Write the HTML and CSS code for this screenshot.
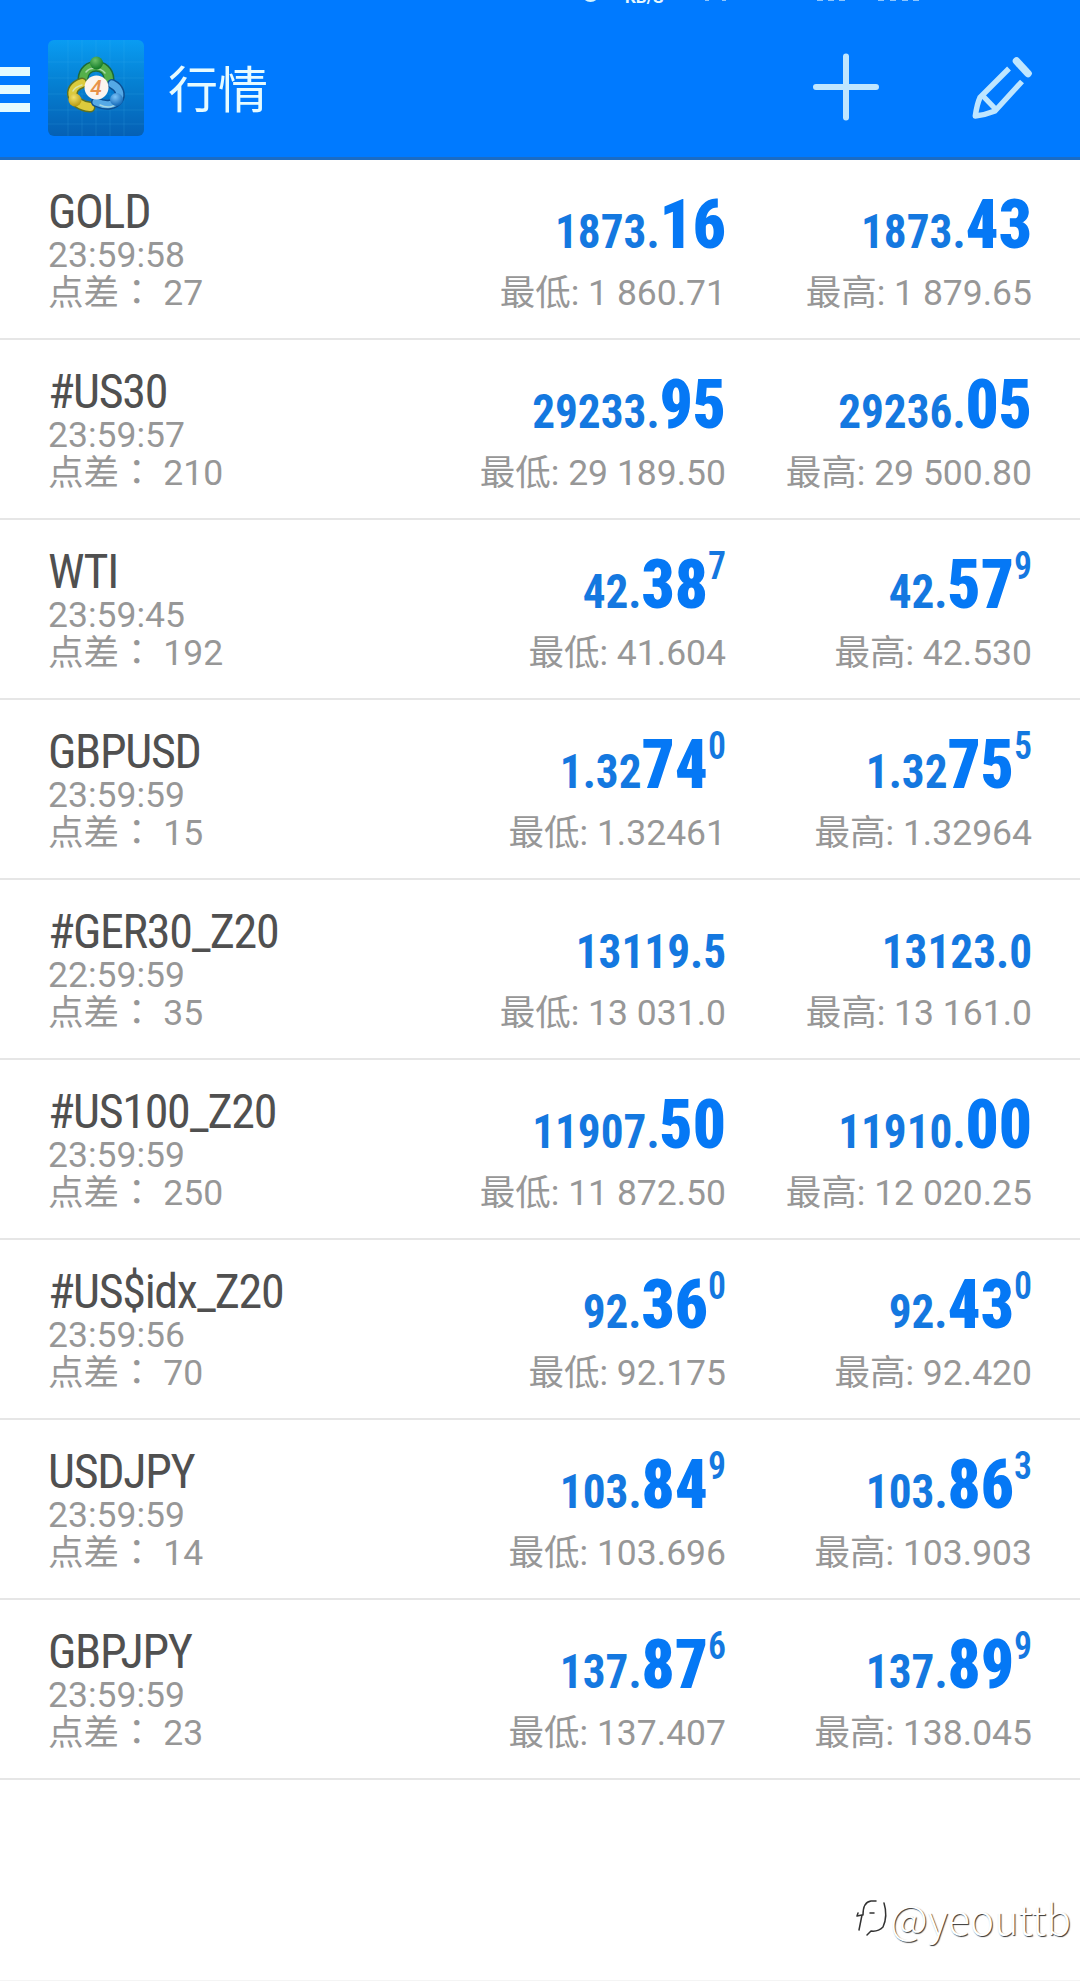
FILE: index.html
```html
<!DOCTYPE html>
<html lang="zh-CN">
<head>
<meta charset="utf-8">
<title>行情</title>
<link rel="stylesheet" href="styles.css">
</head>
<body>
<header class="topbar">
  <svg class="status" width="1080" height="6" viewBox="0 0 1080 6" aria-hidden="true">
    <circle cx="590.5" cy="-7" r="7.5" fill="none" stroke="#d5f5ff" stroke-width="3"/>
    <text class="status-text" x="625" y="3">KB/S</text>
    <g fill="#8cc6ff">
      <rect x="705" y="0" width="4" height="1"/><rect x="722" y="0" width="4" height="1"/>
      <rect x="817" y="0" width="6" height="1"/><rect x="828" y="0" width="6" height="1"/><rect x="839" y="0" width="6" height="1"/>
      <rect x="878" y="0" width="6" height="1"/><rect x="890" y="0" width="6" height="1"/><rect x="902" y="0" width="6" height="1"/><rect x="913" y="0" width="6" height="1"/>
    </g>
  </svg>
  <div class="menu"><span></span><span></span><span></span></div>
  <svg class="logo" width="96" height="96" viewBox="0 0 96 96">
    <defs>
      <linearGradient id="bg" x1="0" y1="0" x2="0" y2="1"><stop offset="0" stop-color="#0a9cf2"/><stop offset=".45" stop-color="#0580d2"/><stop offset="1" stop-color="#0560b4"/></linearGradient>
      <radialGradient id="gr" cx=".4" cy=".3" r=".7"><stop offset="0" stop-color="#6cc06a"/><stop offset="1" stop-color="#117a26"/></radialGradient>
      <radialGradient id="ye" cx=".4" cy=".3" r=".7"><stop offset="0" stop-color="#f3e36a"/><stop offset="1" stop-color="#b99a12"/></radialGradient>
      <radialGradient id="bl" cx=".4" cy=".3" r=".7"><stop offset="0" stop-color="#7cc4f8"/><stop offset="1" stop-color="#1268b8"/></radialGradient>
    </defs>
    <rect width="96" height="96" rx="6" fill="url(#bg)"/>
    <path d="M20 0V96M34 0V96M48 0V96M62 0V96M76 0V96M0 22H96M0 38H96M0 54H96M0 70H96M0 84H96" stroke="#4fc2f5" stroke-opacity=".16" fill="none"/>
    <g fill="none" stroke-linecap="round">
      <path d="M35 39C36 22 60 22 61 39" stroke="#1c6a3a" stroke-width="11"/>
      <path d="M35 39C36 22 60 22 61 39" stroke="#55b04a" stroke-width="8"/>
      <path d="M34 43C18 48 23 65 42 67" stroke="#5f7220" stroke-width="11"/>
      <path d="M34 43C18 48 23 65 42 67" stroke="#dccb3d" stroke-width="8"/>
      <path d="M64 44C80 52 70 72 48 62" stroke="#0c4f92" stroke-width="10"/>
      <path d="M64 44C80 52 70 72 48 62" stroke="#55a9e6" stroke-width="7"/>
      <path d="M38 32C42 27 52 27 57 33M25 51C27 47 31 46 34 45M52 65C60 69 68 67 71 60" stroke="#d9f3df" stroke-opacity=".65" stroke-width="1.5"/>
    </g>
    <circle cx="48.5" cy="23" r="6.5" fill="url(#gr)"/>
    <circle cx="27" cy="60" r="6.5" fill="url(#ye)"/>
    <circle cx="68.5" cy="59.5" r="6.5" fill="url(#bl)"/>
    <circle cx="48.5" cy="47.5" r="12" fill="#fbf4ef"/>
    <text class="logo-digit" x="48" y="54.5" text-anchor="middle">4</text>
  </svg>
  <h1 class="title">行情</h1>
  <div class="actions">
    <svg width="68" height="68" viewBox="0 0 68 68"><path d="M34 3.500V64.500M4 34H64" stroke="#bfe6ff" stroke-width="6" stroke-linecap="round"/></svg>
    <svg width="64" height="64" viewBox="0 0 64 64" fill="none" stroke="#bfe6ff" stroke-width="5.4" stroke-linejoin="round">
      <path d="M38 13.500L9 42.500Q6 49 4.300 61Q14 60 24 56L51 26.500"/>
      <path d="M12 41L24 53.500"/><path d="M45.500 6L57 18.500" stroke-width="7.500" stroke-linecap="round"/>
    </svg>
  </div>
</header>
<main class="quotes">
  <article class="row">
    <div class="symbol"><h2>GOLD</h2><p>23:59:58</p><p>点差<i lang="zh-TW">：</i> 27</p></div>
    <div class="quote"><div class="price">1873.<b>16</b></div><p>最低: 1 860.71</p></div>
    <div class="quote"><div class="price">1873.<b>43</b></div><p>最高: 1 879.65</p></div>
  </article>
  <article class="row">
    <div class="symbol"><h2>#US30</h2><p>23:59:57</p><p>点差<i lang="zh-TW">：</i> 210</p></div>
    <div class="quote"><div class="price">29233.<b>95</b></div><p>最低: 29 189.50</p></div>
    <div class="quote"><div class="price">29236.<b>05</b></div><p>最高: 29 500.80</p></div>
  </article>
  <article class="row">
    <div class="symbol"><h2>WTI</h2><p>23:59:45</p><p>点差<i lang="zh-TW">：</i> 192</p></div>
    <div class="quote"><div class="price">42.<b>38</b><sup>7</sup></div><p>最低: 41.604</p></div>
    <div class="quote"><div class="price">42.<b>57</b><sup>9</sup></div><p>最高: 42.530</p></div>
  </article>
  <article class="row">
    <div class="symbol"><h2>GBPUSD</h2><p>23:59:59</p><p>点差<i lang="zh-TW">：</i> 15</p></div>
    <div class="quote"><div class="price">1.32<b>74</b><sup>0</sup></div><p>最低: 1.32461</p></div>
    <div class="quote"><div class="price">1.32<b>75</b><sup>5</sup></div><p>最高: 1.32964</p></div>
  </article>
  <article class="row">
    <div class="symbol"><h2>#GER30_Z20</h2><p>22:59:59</p><p>点差<i lang="zh-TW">：</i> 35</p></div>
    <div class="quote"><div class="price">13119.5</div><p>最低: 13 031.0</p></div>
    <div class="quote"><div class="price">13123.0</div><p>最高: 13 161.0</p></div>
  </article>
  <article class="row">
    <div class="symbol"><h2>#US100_Z20</h2><p>23:59:59</p><p>点差<i lang="zh-TW">：</i> 250</p></div>
    <div class="quote"><div class="price">11907.<b>50</b></div><p>最低: 11 872.50</p></div>
    <div class="quote"><div class="price">11910.<b>00</b></div><p>最高: 12 020.25</p></div>
  </article>
  <article class="row">
    <div class="symbol"><h2>#US$idx_Z20</h2><p>23:59:56</p><p>点差<i lang="zh-TW">：</i> 70</p></div>
    <div class="quote"><div class="price">92.<b>36</b><sup>0</sup></div><p>最低: 92.175</p></div>
    <div class="quote"><div class="price">92.<b>43</b><sup>0</sup></div><p>最高: 92.420</p></div>
  </article>
  <article class="row">
    <div class="symbol"><h2>USDJPY</h2><p>23:59:59</p><p>点差<i lang="zh-TW">：</i> 14</p></div>
    <div class="quote"><div class="price">103.<b>84</b><sup>9</sup></div><p>最低: 103.696</p></div>
    <div class="quote"><div class="price">103.<b>86</b><sup>3</sup></div><p>最高: 103.903</p></div>
  </article>
  <article class="row">
    <div class="symbol"><h2>GBPJPY</h2><p>23:59:59</p><p>点差<i lang="zh-TW">：</i> 23</p></div>
    <div class="quote"><div class="price">137.<b>87</b><sup>6</sup></div><p>最低: 137.407</p></div>
    <div class="quote"><div class="price">137.<b>89</b><sup>9</sup></div><p>最高: 138.045</p></div>
  </article>
</main>
<footer class="credit">
  <svg width="36" height="42" viewBox="0 0 36 42" fill="none" stroke="#333" stroke-width="1.5" stroke-linecap="round" stroke-linejoin="round">
    <path d="M5 34L8 19L3 20L4 17M9 19Q9 6 17 5H22M16 17H20M30 7Q34 20 29 31Q24 36 17 35L13 39"/>
  </svg>
  <span>@yeouttb</span>
</footer>
</body>
</html>
```
FILE: styles.css
```css
* { box-sizing: border-box; }
body {
  margin: 0;
  height: 1981px;
  display: flex;
  flex-direction: column;
  background: #fff;
  border-bottom: 1px solid #f4f4f4;
  font-family: Roboto, "Noto Sans CJK SC", sans-serif;
  overflow: hidden;
}
h1, h2, p { margin: 0; font-weight: 400; }

.topbar {
  position: relative;
  flex: none;
  height: 160px;
  padding: 16px 45px 0 0;
  display: flex;
  align-items: center;
  background: #007aff;
  border-bottom: 3px solid #1b6cc4;
}
.status { position: absolute; left: 0; top: 0; }
.status-text { font: 700 17px Roboto, sans-serif; fill: #e6f8ff; }
.menu {
  width: 30px;
  margin-right: 18px;
  display: flex;
  flex-direction: column;
  gap: 9px;
  padding-top: 6px;
}
.menu span { height: 9px; background: #e4fbff; }
.logo { margin-top: 2px; }
.logo-digit { font: italic 500 21px Roboto, sans-serif; fill: #e8924a; }
.title {
  margin: 9px 0 0 24px;
  font-size: 50px;
  line-height: 60px;
  color: #e6fbff;
}
.actions {
  margin-left: auto;
  display: flex;
  align-items: center;
  gap: 91px;
}

.row {
  height: 180px;
  padding: 0 48px;
  display: grid;
  grid-template-columns: 1fr 306px 306px;
  border-bottom: 2px solid #e6e6e6;
}
.row p {
  font-size: 35.5px;
  line-height: 38px;
  color: #979797;
  white-space: nowrap;
}
.symbol { padding-top: 27.6px; }
.symbol h2 {
  margin-bottom: 1px;
  font-family: "Roboto Condensed", sans-serif;
  font-size: 48px;
  line-height: 47px;
  letter-spacing: -1.3px;
  color: #505050;
  white-space: nowrap;
}
.symbol i { font-family: "Noto Sans CJK TC", sans-serif; font-style: normal; line-height: 0; }
.quote { padding-top: 42px; text-align: right; }
.price {
  height: 60px;
  margin-bottom: 12px;
  font-family: "Roboto Condensed", sans-serif;
  font-size: 48px;
  font-weight: 700;
  line-height: 60px;
  color: #1478e0;
  transform: scaleX(.942);
  transform-origin: right;
}
.price b { font-size: 69px; line-height: 0; color: #0578f5; }
.price sup {
  font-size: 38px;
  font-weight: 600;
  line-height: 0;
  vertical-align: 29px;
}

.credit {
  margin-top: auto;
  padding: 0 9px 40px 0;
  display: flex;
  justify-content: flex-end;
  align-items: center;
  color: #fff;
  font-family: "Noto Sans CJK SC", sans-serif;
  font-size: 41px;
  font-weight: 300;
  line-height: 46px;
  text-shadow: 1px 1px 1px #333;
}
```
